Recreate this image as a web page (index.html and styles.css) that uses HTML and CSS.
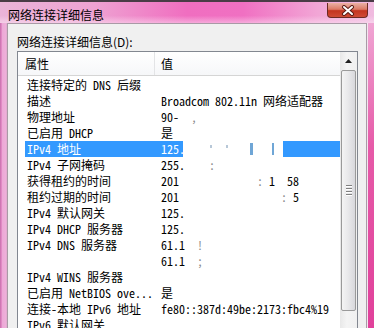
FILE: index.html
```html
<!DOCTYPE html>
<html lang="zh-CN">
<head>
    <meta charset="UTF-8">
    <title>网络连接详细信息</title>
    <link rel="stylesheet" href="styles.css">
</head>
<body>

<div class="window">
    <div class="titlebar">
        <span class="title">网络连接详细信息</span>
        <div class="close">
            <svg width="14" height="11" viewBox="0 0 14 11">
                <path d="M3 2 L11 9 M11 2 L3 9" stroke="#5a1c16" stroke-width="4" stroke-linecap="round"/>
                <path d="M3 2 L11 9 M11 2 L3 9" stroke="#fff" stroke-width="2" stroke-linecap="round"/>
            </svg>
        </div>
    </div>

    <div class="frame">
        <div class="side-left"></div>
        <div class="body">
            <div class="label">网络连接详细信息(D):</div>
            <div class="list">
                <div class="list-main">
                    <div class="header">
                        <div class="hcol1">属性</div>
                        <div class="hcol2">值</div>
                    </div>
                    <div class="rows">
                        <div class="row"><div class="c1">连接特定的 DNS 后缀</div><div class="c2"></div></div>
                        <div class="row"><div class="c1">描述</div><div class="c2">Broadcom 802.11n 网络适配器</div></div>
                        <div class="row"><div class="c1">物理地址</div><div class="c2">90-  <span class="faint">,</span></div></div>
                        <div class="row"><div class="c1">已启用 DHCP</div><div class="c2">是</div></div>
                        <div class="row sel">
                            <div class="c1">IPv4 地址</div>
                            <div class="c2">
                                <span class="val">125.</span><span class="redact"><i class="mark m1"></i><i class="mark m2"></i><i class="bar b1"></i><i class="bar b2"></i></span>
                            </div>
                        </div>
                        <div class="row"><div class="c1">IPv4 子网掩码</div><div class="c2">255.    <span class="faint">:</span></div></div>
                        <div class="row"><div class="c1">获得租约的时间</div><div class="c2">201             <span class="faint">:</span> 1  58</div></div>
                        <div class="row"><div class="c1">租约过期的时间</div><div class="c2">201                 <span class="faint">:</span> 5</div></div>
                        <div class="row"><div class="c1">IPv4 默认网关</div><div class="c2">125.</div></div>
                        <div class="row"><div class="c1">IPv4 DHCP 服务器</div><div class="c2">125.</div></div>
                        <div class="row"><div class="c1">IPv4 DNS 服务器</div><div class="c2">61.1  <span class="faint">!</span></div></div>
                        <div class="row"><div class="c1"></div><div class="c2">61.1  <span class="faint">;</span></div></div>
                        <div class="row"><div class="c1">IPv4 WINS 服务器</div><div class="c2"></div></div>
                        <div class="row"><div class="c1">已启用 NetBIOS ove...</div><div class="c2">是</div></div>
                        <div class="row"><div class="c1">连接-本地 IPv6 地址</div><div class="c2">fe80::387d:49be:2173:fbc4%19</div></div>
                        <div class="row"><div class="c1">IPv6 默认网关</div><div class="c2"></div></div>
                    </div>
                </div>
                <div class="scrollbar">
                    <div class="sb-up">
                        <svg width="7" height="4" viewBox="0 0 7 4"><path d="M0 4 L3.5 0 L7 4 Z" fill="#202020"/></svg>
                    </div>
                    <div class="thumb">
                        <div class="grip"><i></i><i></i><i></i><i></i></div>
                    </div>
                </div>
            </div>
        </div>
        <div class="side-right"></div>
    </div>
</div>

</body>
</html>
```

FILE: styles.css
```css
/* general */
html, body {
    margin: 0;
    padding: 0;
}

body {
    width: 374px;
    height: 328px;
    overflow: hidden;
    font-family: "Noto Sans CJK SC", sans-serif;
    color: #000;
}

.window {
    width: 374px;
    height: 328px;
    display: flex;
    flex-direction: column;
    overflow: hidden;
}

/* title bar */
.titlebar {
    height: 27px;
    border-top: 2px solid #4a3c46;
    display: flex;
    align-items: flex-start;
    padding-left: 8px;
    background:
        linear-gradient(180deg, rgba(255, 255, 255, 0) 65%, rgba(255, 240, 250, 0.45) 100%),
        linear-gradient(90deg, #ebb4d8 0%, #eea2d2 25%, #f06ec0 50%, #f070c2 65%, #f2a6d6 85%, #f0bce0 100%);
}

.title {
    font-size: 12px;
    line-height: 16px;
    margin-top: 5px;
}

.close {
    margin-left: auto;
    margin-right: 6px;
    margin-top: 1px;
    width: 39px;
    height: 14px;
    border: 1px solid #6b2a24;
    border-top: none;
    border-radius: 0 0 4px 4px;
    background: linear-gradient(180deg, #eab0a4 0%, #dc7a66 45%, #c3341f 55%, #cf4a35 100%);
    display: flex;
    align-items: center;
    justify-content: center;
}

/* frame */
.frame {
    flex: 1;
    display: flex;
}

.side-left {
    width: 7px;
    background: linear-gradient(90deg, #c983b4 0, #d46cb2 1px, #eca8d6 2px, #eeb0da 6px, #d9a8c8 7px);
}

.side-right {
    width: 7px;
    background: linear-gradient(180deg, #f0a6d4 0%, #e65aa8 40%, #e0409a 100%);
    border-left: 1px solid #f4e6f0;
    box-sizing: border-box;
}

.body {
    flex: 1;
    display: flex;
    flex-direction: column;
    background-color: #f0f0f0;
    border: 1px solid #a99aa6;
    border-bottom: none;
    padding: 10px 8px 0 9px;
    min-height: 0;
}

.label {
    font-size: 12px;
    line-height: 16px;
    margin-bottom: 1px;
}

/* list view */
.list {
    flex: 1;
    display: flex;
    border: 1px solid #828790;
    border-bottom: none;
    background-color: #fff;
    min-height: 0;
    overflow: hidden;
}

.list-main {
    flex: 1;
    font-family: "Noto Sans Mono CJK SC", "Noto Sans CJK SC", monospace;
    font-size: 12px;
}

.header {
    display: flex;
    height: 23px;
    line-height: 23px;
    border-bottom: 1px solid #d5d5d5;
    background: linear-gradient(180deg, #ffffff 0%, #f6f7f9 100%);
    font-family: "Noto Sans CJK SC", sans-serif;
}

.hcol1 {
    width: 137px;
    box-sizing: border-box;
    padding-left: 7px;
    border-right: 1px solid #e3e4e6;
}

.hcol2 {
    padding-left: 6px;
}

.rows {
    padding-top: 1px;
}

.row {
    display: flex;
    height: 16px;
    line-height: 16px;
    margin-left: 7px;
    white-space: pre;
}

.c1 {
    width: 134px;
    padding-left: 2px;
}

.c2 {
    flex: 1;
    display: flex;
}

.faint {
    color: #8a8a8a;
}

.row.sel {
    background-color: #3399ff;
    color: #fff;
}

.val {
    width: 22px;
}

.redact {
    display: flex;
    align-items: center;
    width: 100px;
    height: 16px;
    background-color: #fff;
}

.mark {
    display: block;
    width: 2px;
    height: 3px;
    background-color: #b8c8d8;
}

.m1 {
    margin-left: 27px;
    margin-top: -6px;
}

.m2 {
    margin-left: 14px;
    margin-top: -5px;
}

.bar {
    display: block;
    height: 12px;
    background-color: #6fa6d6;
}

.b1 {
    width: 3px;
    margin-left: 22px;
}

.b2 {
    width: 2px;
    margin-left: 19px;
}

/* scrollbar */
.scrollbar {
    width: 17px;
    background: linear-gradient(90deg, #e8e8e8 0%, #f4f4f4 40%, #f0f0f0 100%);
}

.sb-up {
    height: 17px;
    display: flex;
    align-items: center;
    justify-content: center;
}

.thumb {
    margin: 1px 1px 0 1px;
    height: 239px;
    border: 1px solid #9a9a9a;
    border-radius: 2px;
    background: linear-gradient(90deg, #f4f4f4 0%, #e9e9eb 45%, #d8d8dc 100%);
    display: flex;
    align-items: center;
    justify-content: center;
}

.grip i {
    display: block;
    width: 6px;
    height: 1px;
    margin-bottom: 1px;
    background-color: #808080;
    border-bottom: 1px solid #fff;
}
```
